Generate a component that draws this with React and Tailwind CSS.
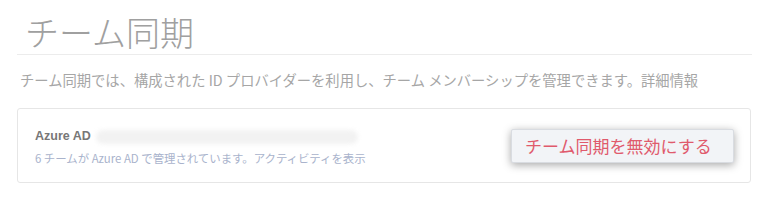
export default function App() {
  return (
    <div
      className="w-[771px] h-[203px] bg-white overflow-hidden"
      style={{ fontFamily: '"Noto Sans CJK JP", "Noto Sans", sans-serif' }}
    >
      <div className="pl-[17px] pr-[19px] pt-[12px]">
        {/* Title */}
        <div className="border-b border-[#ececec] pl-[8px] h-[43px]">
          <h1 className="text-[34px] leading-[40px] font-light text-[#a0a0a0]">
            チーム同期
          </h1>
        </div>

        {/* Description */}
        <p className="mt-[15px] pl-[3px] text-[14.3px] leading-[20px] text-[#a6a6a6]">
          チーム同期では、構成された ID プロバイダーを利用し、チーム メンバーシップを管理できます。詳細情報
        </p>

        {/* Provider card */}
        <div className="mt-[18px] mr-[1px] h-[75px] border border-[#e6e6e6] rounded-[3px] flex items-center justify-between pl-[17px] pr-[16px]">
          <div className="pt-[2px]">
            <div className="flex items-center gap-[5px] h-[18px]">
              <span
                className="text-[12.5px] font-bold text-[#777]"
                style={{ fontFamily: '"Liberation Sans", Arial, sans-serif' }}
              >
                Azure AD
              </span>
              <span className="w-[262px] h-[14px] rounded-full bg-[#f2f2f2] blur-[2px]"></span>
            </div>
            <div className="mt-[4px] text-[11.4px] leading-[16px] text-[#a9b3cc]">
              6 チームが Azure AD で管理されています。アクティビティを表示
            </div>
          </div>
          <button className="w-[223px] h-[34px] bg-[#f2f4f7] border border-[#d9dce1] rounded-[2px] shadow-[0_2px_8px_rgba(0,0,0,0.35)] text-[17px] text-[#e05a6c] pl-[13px] text-left">
            チーム同期を無効にする
          </button>
        </div>
      </div>
    </div>
  );
}
